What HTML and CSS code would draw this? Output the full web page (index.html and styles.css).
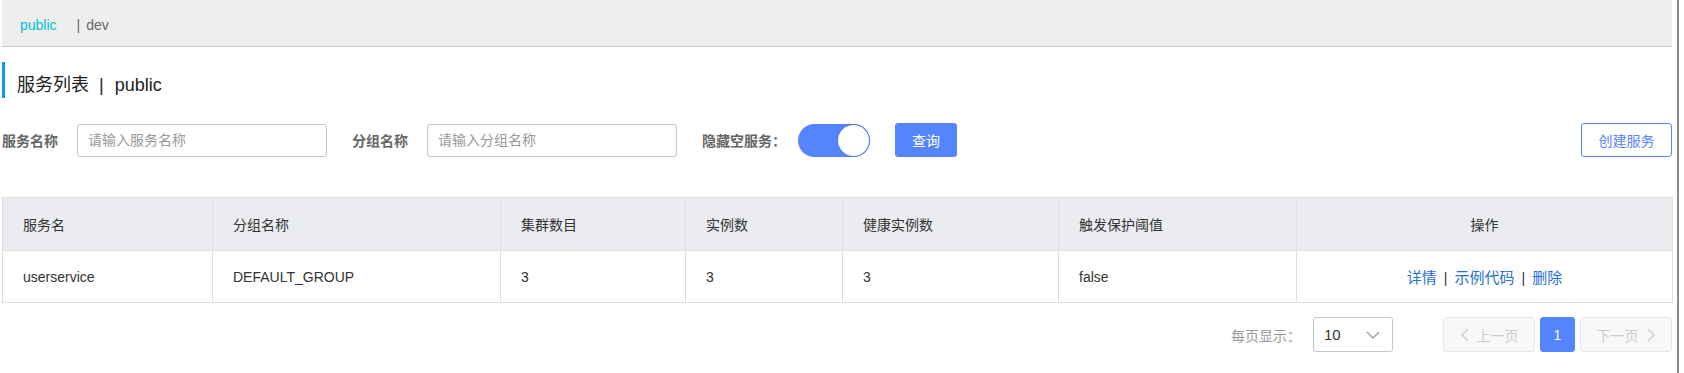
FILE: index.html
```html
<!DOCTYPE html>
<html lang="zh-CN">
<head>
<meta charset="utf-8">
<title>服务列表</title>
<link rel="stylesheet" href="styles.css">
</head>
<body>
<div class="page">
  <div class="content">
    <div class="ns-bar">
      <span class="ns-tab ns-active">public</span>
      <span class="ns-sep">|</span>
      <span class="ns-tab">dev</span>
    </div>

    <div class="page-title">
      <span>服务列表</span><span class="title-sep">|</span><span>public</span>
    </div>

    <div class="filter-row">
      <label class="f-label">服务名称</label>
      <input class="f-input" type="text" placeholder="请输入服务名称">
      <label class="f-label f-gap">分组名称</label>
      <input class="f-input" type="text" placeholder="请输入分组名称">
      <label class="f-label f-gap f-label-tight">隐藏空服务：</label>
      <span class="switch"><span class="knob"></span></span>
      <button class="btn btn-primary">查询</button>
      <button class="btn btn-outline">创建服务</button>
    </div>

    <table class="svc-table">
      <colgroup>
        <col style="width:210px"><col style="width:288px"><col style="width:185px"><col style="width:157px"><col style="width:216px"><col style="width:238px"><col style="width:376px">
      </colgroup>
      <thead>
        <tr>
          <th>服务名</th><th>分组名称</th><th>集群数目</th><th>实例数</th><th>健康实例数</th><th>触发保护阈值</th><th class="center">操作</th>
        </tr>
      </thead>
      <tbody>
        <tr>
          <td>userservice</td><td>DEFAULT_GROUP</td><td>3</td><td>3</td><td>3</td><td>false</td>
          <td class="center"><a class="link">详情</a><span class="link-sep">|</span><a class="link">示例代码</a><span class="link-sep">|</span><a class="link">删除</a></td>
        </tr>
      </tbody>
    </table>

    <div class="pager">
      <span class="pager-label">每页显示：</span>
      <div class="page-size">
        <span>10</span>
        <svg class="chev-down" width="14" height="8" viewBox="0 0 14 8"><path d="M1 1 L7 7 L13 1" fill="none" stroke="#999" stroke-width="1.3"/></svg>
      </div>
      <button class="pg pg-prev" disabled>
        <svg width="9" height="14" viewBox="0 0 9 14"><path d="M8 1 L2 7 L8 13" fill="none" stroke="#ccc" stroke-width="1.4"/></svg>
        <span>上一页</span>
      </button>
      <button class="pg pg-current">1</button>
      <button class="pg pg-next" disabled>
        <span>下一页</span>
        <svg width="9" height="14" viewBox="0 0 9 14"><path d="M1 1 L7 7 L1 13" fill="none" stroke="#ccc" stroke-width="1.4"/></svg>
      </button>
    </div>
  </div>
</div>
</body>
</html>
```
FILE: styles.css
```css
* { box-sizing: border-box; }
html, body { margin: 0; padding: 0; background: #fff; }
body {
  font-family: "Liberation Sans", "Noto Sans CJK SC", sans-serif;
  font-size: 14px;
  color: #333;
}
.page {
  width: 1679px;
  height: 373px;
  border-right: 2px solid #8c8c8c;
  overflow: hidden;
}
.content {
  margin-left: 2px;
  width: 1670px;
}

/* namespace bar */
.ns-bar {
  height: 47px;
  background: #eeeeee;
  border-bottom: 1px solid #cccccc;
  display: flex;
  align-items: center;
  padding-left: 18px;
  padding-top: 3px;
}
.ns-tab { color: #666; }
.ns-active { color: #00c1de; }
.ns-sep { color: #666; margin: 0 6px 0 20px; }

/* title */
.page-title {
  margin-top: 15px;
  height: 36px;
  padding-top: 11px;
  line-height: 25px;
  border-left: 3px solid #0a9fd6;
  padding-left: 12px;
  font-size: 18px;
  color: #222;
}
.title-sep { margin: 0 11px 0 10px; }

/* filter row */
.filter-row {
  margin-top: 25px;
  height: 34px;
  display: flex;
  align-items: center;
}
.f-label {
  font-weight: bold;
  color: #666;
  margin-right: 19px;
}
.f-gap { margin-left: 25px; }
.f-label-tight { margin-right: 12px; }
.f-input {
  width: 250px;
  height: 33px;
  border: 1px solid #c4c6cf;
  border-radius: 3px;
  padding: 0 10px;
  font-family: inherit;
  font-size: 14px;
  color: #333;
  outline: none;
}
.f-input::placeholder { color: #999; }
.switch {
  width: 72px;
  height: 33px;
  border-radius: 17px;
  background: #5584ff;
  display: flex;
  justify-content: flex-end;
  align-items: center;
  padding: 1px;
}
.knob {
  width: 31px;
  height: 31px;
  border-radius: 50%;
  background: #fff;
  box-shadow: 0 0 0 1px #4a78f0;
}
.btn {
  height: 34px;
  border-radius: 3px;
  font-family: inherit;
  font-size: 14px;
  padding: 0;
  cursor: pointer;
}
.btn-primary {
  margin-left: 25px;
  width: 62px;
  background: #5584ff;
  border: 1px solid #5584ff;
  color: #fff;
}
.btn-outline {
  margin-left: auto;
  width: 91px;
  background: #fff;
  border: 1px solid #5584ff;
  color: #5584ff;
}

/* table */
.svc-table {
  margin-top: 40px;
  width: 1670px;
  border-collapse: collapse;
  table-layout: fixed;
}
.svc-table th, .svc-table td {
  border: 1px solid #dcdee3;
  padding: 0 20px;
  text-align: left;
  font-weight: normal;
  color: #333;
}
.svc-table th {
  background: #ebecf0;
  height: 53px;
}
.svc-table td { height: 52px; }
.svc-table .center { text-align: center; }
.link { color: #1f6fd6; cursor: pointer; font-size: 15px; }
.link-sep { color: #333; margin: 0 7px; }

/* pager */
.pager {
  margin-top: 14px;
  display: flex;
  justify-content: flex-end;
  align-items: center;
  height: 35px;
}
.pager-label { color: #999; margin-right: 12px; }
.page-size {
  width: 80px;
  height: 35px;
  border: 1px solid #c4c6cf;
  border-radius: 3px;
  display: flex;
  align-items: center;
  justify-content: space-between;
  padding: 0 12px 0 10px;
  font-size: 15px;
  color: #333;
  margin-right: 50px;
}
.pg {
  height: 35px;
  border-radius: 3px;
  font-family: inherit;
  font-size: 14px;
  display: flex;
  align-items: center;
  justify-content: center;
  gap: 8px;
  padding: 0;
}
.pg-prev, .pg-next {
  width: 92px;
  background: #f7f8fa;
  border: 1px solid #e6e7eb;
  color: #cccccc;
}
.pg-current {
  width: 35px;
  margin: 0 5px;
  background: #5584ff;
  border: 1px solid #5584ff;
  color: #fff;
}
```
